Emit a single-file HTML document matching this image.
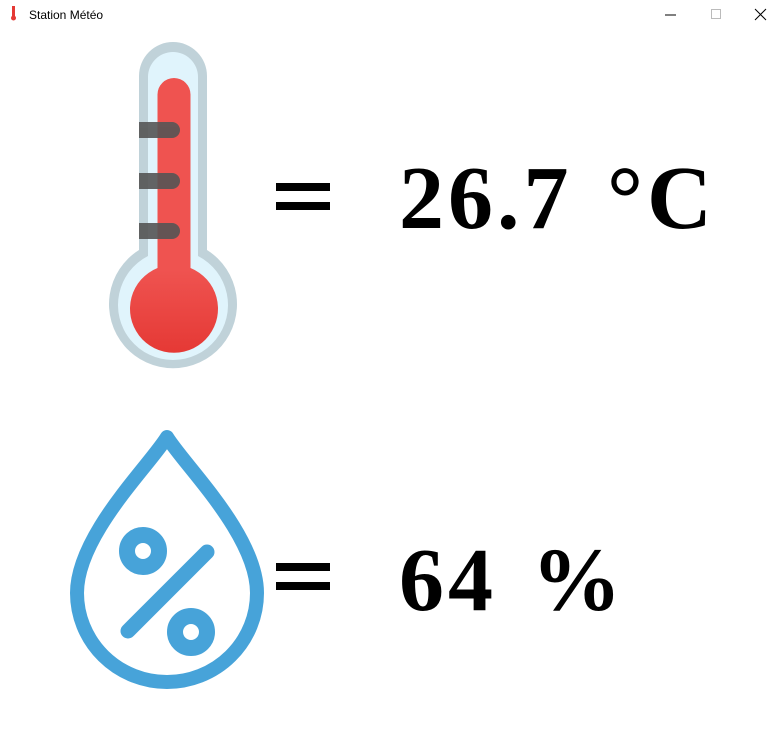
<!DOCTYPE html>
<html><head><meta charset="utf-8"><style>
html,body{margin:0;padding:0;width:783px;height:741px;background:#fff;overflow:hidden;position:relative;font-family:"Liberation Sans",sans-serif}
.t{position:absolute;font-family:"Liberation Serif",serif;font-weight:bold;color:#000;white-space:nowrap;font-size:90px;line-height:1;letter-spacing:4px;word-spacing:8px}
</style></head><body>
<div style="position:absolute;left:29px;top:8px;font-size:12px;color:#000">Station Météo</div>
<svg style="position:absolute;left:0;top:0" width="783" height="741">
<rect x="12" y="6" width="3" height="11" fill="#e53935"/><circle cx="13.5" cy="18" r="2.5" fill="#e53935"/>
<line x1="665" y1="15" x2="676" y2="15" stroke="#000" stroke-width="1"/>
<rect x="711.5" y="9.5" width="9" height="9" fill="none" stroke="#bbb"/>
<path d="M755 9 L766 20 M766 9 L755 20" stroke="#000" stroke-width="1"/>
<path d="M173 42 a34 34 0 0 1 34 34 V250 a64 64 0 1 1 -68 0 V76 a34 34 0 0 1 34 -34 Z" fill="#c0d2d9"/>
<path d="M173 52 a25 25 0 0 1 25 25 V256 a55 55 0 1 1 -50 0 V77 a25 25 0 0 1 25 -25 Z" fill="#e0f4fc"/>
<defs><linearGradient id="g" x1="0" y1="0" x2="0" y2="1"><stop offset="0" stop-color="#ef5350"/><stop offset="0.7" stop-color="#ef5350"/><stop offset="1" stop-color="#e53935"/></linearGradient></defs>
<path d="M174 78 a16.5 16.5 0 0 1 16.5 16.5 V268 a44 44 0 1 1 -33 0 V94.5 a16.5 16.5 0 0 1 16.5 -16.5 Z" fill="url(#g)"/>
<g fill="#555" opacity="0.9">
<path d="M139 122 H172 a8 8 0 0 1 0 16 H139 Z"/>
<path d="M139 173 H172 a8 8 0 0 1 0 16 H139 Z"/>
<path d="M139 223 H172 a8 8 0 0 1 0 16 H139 Z"/>
</g>
<g fill="none" stroke="#47a3d9" stroke-width="14" stroke-linecap="round" stroke-linejoin="round">
<path d="M167 437 C150 465 77 535 77 593 A90 89 0 0 0 257 593 C257 535 184 465 167 437 Z"/>
<circle cx="143" cy="551" r="16" stroke-width="16"/>
<circle cx="191" cy="632" r="16" stroke-width="16"/>
<line x1="128" y1="631" x2="207" y2="552" stroke-width="15"/>
</g>
<rect x="276" y="183" width="54" height="8" fill="#000"/><rect x="276" y="202" width="54" height="8" fill="#000"/>
<rect x="276" y="563" width="54" height="8" fill="#000"/><rect x="276" y="582" width="54" height="8" fill="#000"/>
</svg>
<div class="t" style="left:399px;top:154px">26.7 °C</div>
<div class="t" style="left:399px;top:536px">64 %</div>
</body></html>
